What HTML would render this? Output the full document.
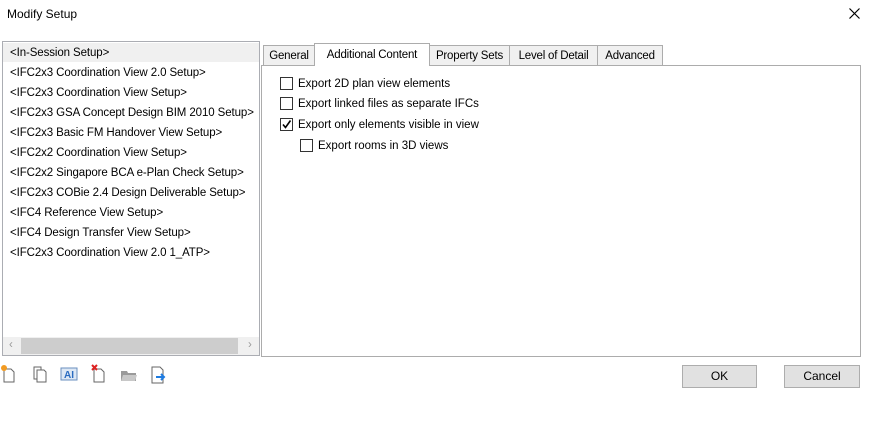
<!DOCTYPE html>
<html><head><style>
body{margin:0;width:869px;height:439px;background:#fff;font-family:"Liberation Sans",sans-serif;font-size:11.5px;color:#000;position:relative;overflow:hidden}
.a{position:absolute;white-space:nowrap}
.list{left:2px;top:41px;width:256px;height:313px;border:1px solid #abadb3;overflow:hidden}
.it{position:absolute;left:7px;height:20px;line-height:22px;letter-spacing:-0.1px}
.tab{position:absolute;top:45px;height:20px;line-height:21px;background:#f0f0f0;border:1px solid #acacac;border-bottom:none;text-align:center;box-sizing:border-box;letter-spacing:-0.2px}
.cb{position:absolute;width:13px;height:13px;border:1px solid #333;box-sizing:border-box;background:#fff}
.l{position:absolute;white-space:nowrap;margin-top:1px}
.btn{position:absolute;top:365px;height:23px;background:#e1e1e1;border:1px solid #adadad;box-sizing:border-box;text-align:center;line-height:21px;font-size:12px}
</style></head><body>
<div class="a" style="left:7px;top:7px;font-size:12px">Modify Setup</div>
<svg class="a" style="left:849px;top:8px" width="11" height="11"><path d="M0.5 0.5L10.5 10.5M10.5 0.5L0.5 10.5" stroke="#000" stroke-width="1.2"/></svg>
<div class="a list">
<div class="a" style="left:0;top:1px;width:256px;height:19px;background:#f0f0f0"></div>
<div class="it" style="top:0">&lt;In-Session Setup&gt;</div>
<div class="it" style="top:20px">&lt;IFC2x3 Coordination View 2.0 Setup&gt;</div>
<div class="it" style="top:40px">&lt;IFC2x3 Coordination View Setup&gt;</div>
<div class="it" style="top:60px">&lt;IFC2x3 GSA Concept Design BIM 2010 Setup&gt;</div>
<div class="it" style="top:80px">&lt;IFC2x3 Basic FM Handover View Setup&gt;</div>
<div class="it" style="top:100px">&lt;IFC2x2 Coordination View Setup&gt;</div>
<div class="it" style="top:120px">&lt;IFC2x2 Singapore BCA e-Plan Check Setup&gt;</div>
<div class="it" style="top:140px">&lt;IFC2x3 COBie 2.4 Design Deliverable Setup&gt;</div>
<div class="it" style="top:160px">&lt;IFC4 Reference View Setup&gt;</div>
<div class="it" style="top:180px">&lt;IFC4 Design Transfer View Setup&gt;</div>
<div class="it" style="top:200px">&lt;IFC2x3 Coordination View 2.0 1_ATP&gt;</div>
<div class="a" style="left:0;top:295px;width:256px;height:18px;background:#f0f0f0"></div>
<div class="a" style="left:18px;top:296px;width:217px;height:16px;background:#cdcdcd"></div>
<div class="a" style="left:6px;top:297px;color:#999">&lsaquo;</div>
<div class="a" style="left:245px;top:297px;color:#999">&rsaquo;</div>
</div>
<div class="a" style="left:261px;top:65px;width:598px;height:290px;border:1px solid #acacac;background:#fff"></div>
<div class="tab" style="left:263px;width:52px">General</div>
<div class="tab" style="left:314px;top:43px;height:23px;width:116px;background:#fff;line-height:23px">Additional Content</div>
<div class="tab" style="left:429px;width:81px">Property Sets</div>
<div class="tab" style="left:509px;width:89px">Level of Detail</div>
<div class="tab" style="left:597px;width:66px">Advanced</div>
<div class="cb" style="left:280px;top:77px"></div><div class="l" style="left:298px;top:77px">Export 2D plan view elements</div>
<div class="cb" style="left:280px;top:97px"></div><div class="l" style="left:298px;top:97px">Export linked files as separate IFCs</div>
<div class="cb" style="left:280px;top:118px"><svg width="11" height="11" style="position:absolute;left:0;top:0"><path d="M2 5.5L4.5 8.5L9.5 1.5" stroke="#000" stroke-width="1.6" fill="none"/></svg></div><div class="l" style="left:298px;top:118px">Export only elements visible in view</div>
<div class="cb" style="left:300px;top:139px"></div><div class="l" style="left:318px;top:139px">Export rooms in 3D views</div>
<svg class="a" style="left:0;top:363px" width="170" height="22">
<g fill="#fff" stroke="#666"><path d="M4 6h7l3 3v10H4z"/><path d="M34 4h7v12h-7z"/><path d="M37 7h7l2 2v10h-9z"/><path d="M94 6h7l3 3v10H94z"/><path d="M152 4h8l3 3v13h-11z"/></g>
<circle cx="4" cy="5" r="3" fill="#f29b22"/>
<rect x="61" y="5" width="16" height="12" fill="#dde8f5" stroke="#6a8fbf"/><text x="64" y="15" font-size="10" font-weight="bold" fill="#2a6bc0" font-family="Liberation Sans">AI</text>
<path d="M92 2l5 5M97 2l-5 5" stroke="#d22" stroke-width="2"/>
<path d="M121 8h6l1 2h8v8h-15z" fill="#9a9a9a"/><path d="M123 12h14l-2 6h-14z" fill="#c8c8c8"/>
<path d="M156 14h8M161 11l3 3-3 3" stroke="#1e7be0" stroke-width="2" fill="none"/>
</svg>
<div class="btn" style="left:682px;width:75px">OK</div>
<div class="btn" style="left:784px;width:76px">Cancel</div>
</body></html>
